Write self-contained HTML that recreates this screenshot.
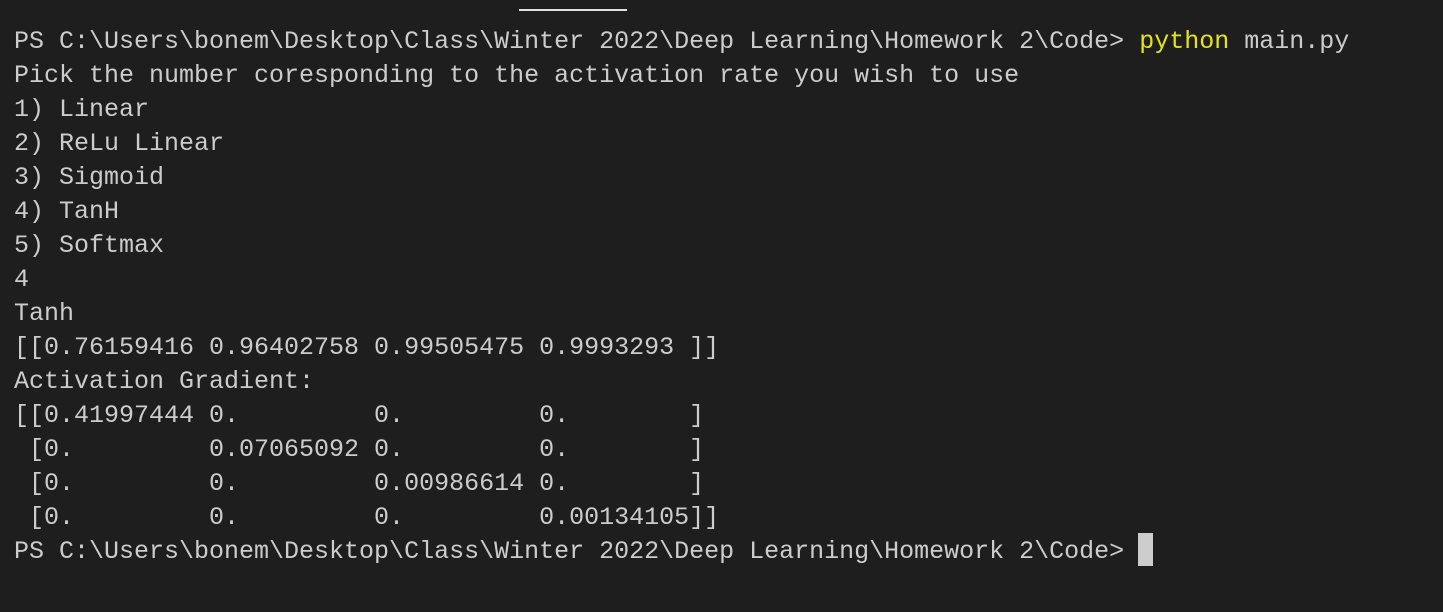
<!DOCTYPE html>
<html><head><style>
html,body{margin:0;padding:0;background:#1e1e1e;width:1443px;height:612px;overflow:hidden}
.bar{position:absolute;left:519px;top:9px;width:108px;height:2px;background:#e0e0e0}
pre{position:absolute;left:14px;top:25px;margin:0;font-family:"Liberation Mono",monospace;font-size:25px;line-height:34px;color:#cccccc;white-space:pre}
.y{color:#e5e510}
.cur{position:absolute;left:1138px;top:533px;width:15px;height:33px;background:#cccccc}
</style></head><body>
<div class="bar"></div>
<pre>PS C:\Users\bonem\Desktop\Class\Winter 2022\Deep Learning\Homework 2\Code&gt; <span class="y">python</span> main.py
Pick the number coresponding to the activation rate you wish to use
1) Linear
2) ReLu Linear
3) Sigmoid
4) TanH
5) Softmax
4
Tanh
[[0.76159416 0.96402758 0.99505475 0.9993293 ]]
Activation Gradient:
[[0.41997444 0.         0.         0.        ]
 [0.         0.07065092 0.         0.        ]
 [0.         0.         0.00986614 0.        ]
 [0.         0.         0.         0.00134105]]
PS C:\Users\bonem\Desktop\Class\Winter 2022\Deep Learning\Homework 2\Code&gt; </pre>
<div class="cur"></div>
</body></html>
